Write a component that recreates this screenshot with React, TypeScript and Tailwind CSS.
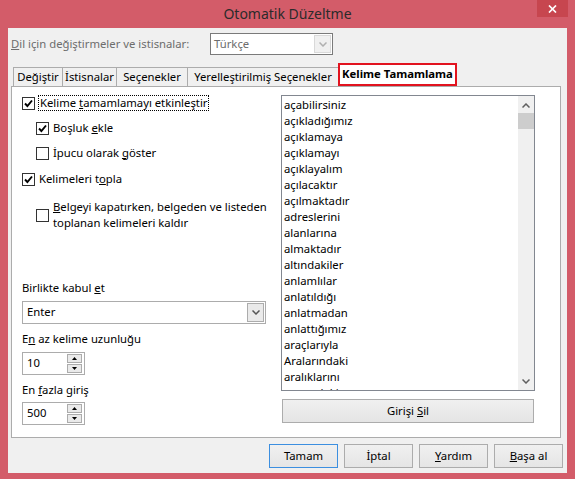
import React from 'react';

const WORDS = [
  'açabilirsiniz', 'açıkladığımız', 'açıklamaya', 'açıklamayı', 'açıklayalım',
  'açılacaktır', 'açılmaktadır', 'adreslerini', 'alanlarına', 'almaktadır',
  'altındakiler', 'anlamlılar', 'anlatıldığı', 'anlatmadan', 'anlattığımız',
  'araçlarıyla', 'Aralarındaki', 'aralıklarını', 'arasındaki',
];

function Check({ checked }: { checked?: boolean }) {
  return (
    <span className="w-[13px] h-[13px] border border-[#333] bg-white flex items-center justify-center shrink-0">
      {checked && (
        <svg width="9" height="9" viewBox="0 0 9 9">
          <path d="M1 4.5 L3.4 7 L8 1.5" stroke="#000" strokeWidth="1.9" fill="none" />
        </svg>
      )}
    </span>
  );
}

function Chevron({ up, color = '#555' }: { up?: boolean; color?: string }) {
  return (
    <svg width="8" height="5" viewBox="0 0 8 5">
      <path d={up ? 'M0.5 4.5 L4 1 L7.5 4.5' : 'M0.5 0.5 L4 4 L7.5 0.5'} stroke={color} strokeWidth="1.5" fill="none" />
    </svg>
  );
}

function Spin({ value }: { value: string }) {
  return (
    <div className="w-[63px] h-[23px] border border-[#acacac] bg-white flex items-center">
      <span className="flex-1 pl-[4px]">{value}</span>
      <div className="w-[15px] h-[19px] mr-[2px] flex flex-col gap-px">
        <div className="flex-1 border border-[#acacac] bg-[#eaeaea] flex items-center justify-center">
          <svg width="5" height="3" viewBox="0 0 5 3"><path d="M0 3 L2.5 0 L5 3 Z" fill="#000" /></svg>
        </div>
        <div className="flex-1 border border-[#acacac] bg-[#eaeaea] flex items-center justify-center">
          <svg width="5" height="3" viewBox="0 0 5 3"><path d="M0 0 L2.5 3 L5 0 Z" fill="#000" /></svg>
        </div>
      </div>
    </div>
  );
}

function Btn({ children, primary, className = '' }: { children: React.ReactNode; primary?: boolean; className?: string }) {
  return (
    <div
      className={`h-[24px] flex items-center justify-center border bg-gradient-to-b from-[#f0f0f0] to-[#e5e5e5] ${primary ? 'border-[#3c8fe0]' : 'border-[#acacac]'} ${className}`}
    >
      <span className="whitespace-nowrap">{children}</span>
    </div>
  );
}

export default function App() {
  return (
    <div className="w-[575px] h-[479px] bg-[#d35c69] flex flex-col text-[11.3px] text-black font-['Noto_Sans',sans-serif]">
      {/* Title bar */}
      <div className="h-[28px] flex justify-center relative shrink-0">
        <span className="mt-[3px] text-[14px] text-[#2b2b2b]">Otomatik Düzeltme</span>
        <div className="absolute right-[7px] top-0 w-[31px] h-[17px] bg-[#c7464f] flex items-center justify-center">
          <svg width="9" height="8" viewBox="0 0 9 8">
            <path d="M1 0.5 L8 7.5 M8 0.5 L1 7.5" stroke="#fff" strokeWidth="1.7" />
          </svg>
        </div>
      </div>

      {/* Client area */}
      <div className="mx-[8px] h-[445px] bg-[#f0f0f0] flex flex-col shrink-0">
        {/* Language */}
        <div className="mt-[5px] h-[22px] flex items-center">
          <span className="w-[202px] pl-[3px] text-[#6d6d6d] whitespace-nowrap">
            <u className="underline-offset-1">D</u>il için değiştirmeler ve istisnalar:
          </span>
          <div className="w-[123px] h-[22px] border border-[#7a7a7a] bg-white flex items-center">
            <span className="flex-1 pl-[3px] text-[#6d6d6d]">Türkçe</span>
            <div className="w-[17px] h-[18px] mr-px border border-[#d9d9d9] bg-[#f0f0f0] flex items-center justify-center">
              <Chevron color="#b0b0b0" />
            </div>
          </div>
        </div>

        {/* Tabs */}
        <div className="mt-[8px] h-[23px] flex items-end pl-[5px] whitespace-nowrap">
          <div className="w-[50px] h-[19px] border border-b-0 border-[#acacac] bg-[#f0f0f0] flex items-center justify-center">Değiştir</div>
          <div className="-ml-px w-[55px] h-[19px] border border-b-0 border-[#acacac] bg-[#f0f0f0] flex items-center justify-center">İstisnalar</div>
          <div className="-ml-px w-[72px] h-[19px] border border-b-0 border-[#acacac] bg-[#f0f0f0] flex items-center justify-center">Seçenekler</div>
          <div className="-ml-px w-[152px] h-[19px] border border-b-0 border-[#acacac] bg-[#f0f0f0] flex items-center justify-center">Yerelleştirilmiş Seçenekler</div>
          <div className="-ml-px w-[119px] h-[23px] border-2 border-[#e2131f] bg-white flex items-center justify-center font-bold">Kelime Tamamlama</div>
        </div>

        {/* Panel */}
        <div className="ml-[3px] w-[550px] h-[352px] border border-[#acacac] bg-white flex pl-[10px]">
          {/* Left column */}
          <div className="w-[244px] flex flex-col whitespace-nowrap">
            <div className="mt-[8px] h-[16px] flex items-center">
              <Check checked />
              <span className="ml-[3px] px-px border border-dotted border-black leading-[14px]">
                Kelime <u className="underline-offset-1">t</u>amamlamayı etkinleştir
              </span>
            </div>
            <div className="mt-[9px] h-[16px] flex items-center pl-[14px]">
              <Check checked />
              <span className="ml-[4px]">Boşluk <u className="underline-offset-1">e</u>kle</span>
            </div>
            <div className="mt-[9px] h-[16px] flex items-center pl-[14px]">
              <Check />
              <span className="ml-[4px]">İpucu olarak <u className="underline-offset-1">g</u>öster</span>
            </div>
            <div className="mt-[10px] h-[16px] flex items-center">
              <Check checked />
              <span className="ml-[4px]">Kelimeleri t<u className="underline-offset-1">o</u>pla</span>
            </div>
            <div className="mt-[12px] h-[32px] flex items-center pl-[14px]">
              <Check />
              <span className="ml-[4px] leading-[16px]">
                <u className="underline-offset-1">B</u>elgeyi kapatırken, belgeden ve listeden
                <br />
                toplanan kelimeleri kaldır
              </span>
            </div>

            <div className="mt-[49px] h-[16px] flex items-center">
              <span>Birlikte kabul <u className="underline-offset-1">e</u>t</span>
            </div>
            <div className="mt-[5px] h-[23px] border border-[#acacac] bg-white flex items-center">
              <span className="flex-1 pl-[4px]">Enter</span>
              <div className="w-[17px] h-[19px] mr-px border border-[#acacac] bg-[#eaeaea] flex items-center justify-center">
                <Chevron color="#555" />
              </div>
            </div>

            <div className="mt-[7px] h-[16px] flex items-center">
              <span>E<u className="underline-offset-1">n</u> az kelime uzunluğu</span>
            </div>
            <div className="mt-[5px]">
              <Spin value="10" />
            </div>

            <div className="mt-[7px] h-[16px] flex items-center">
              <span>En <u className="underline-offset-1">f</u>azla giriş</span>
            </div>
            <div className="mt-[4px]">
              <Spin value="500" />
            </div>
          </div>

          {/* Right column */}
          <div className="ml-[15px] w-[254px] flex flex-col">
            <div className="mt-[8px] h-[296px] border border-[#828790] bg-white flex overflow-hidden">
              <div className="flex-1 pl-[2px] pt-[1px] overflow-hidden">
                {WORDS.map(w => (
                  <div key={w} className="h-[16px] leading-[16px] whitespace-nowrap">{w}</div>
                ))}
              </div>
              <div className="w-[16px] bg-[#f0f0f0] flex flex-col">
                <div className="h-[17px] pt-[2px] flex items-center justify-center"><Chevron up color="#606060" /></div>
                <div className="h-[16px] bg-[#cdcdcd]" />
                <div className="flex-1" />
                <div className="h-[17px] flex items-center justify-center"><Chevron color="#606060" /></div>
              </div>
            </div>
            <Btn className="mt-[8px] ml-px w-[252px]">
              Girişi <u className="underline-offset-1">S</u>il
            </Btn>
          </div>
        </div>

        {/* Bottom buttons */}
        <div className="mt-[6px] flex justify-end gap-[6px] pr-[4px]">
          <Btn primary className="w-[69px]">Tamam</Btn>
          <Btn className="w-[69px]">İptal</Btn>
          <Btn className="w-[69px]"><u className="underline-offset-1">Y</u>ardım</Btn>
          <Btn className="w-[69px]"><u className="underline-offset-1">B</u>aşa al</Btn>
        </div>
      </div>
    </div>
  );
}
